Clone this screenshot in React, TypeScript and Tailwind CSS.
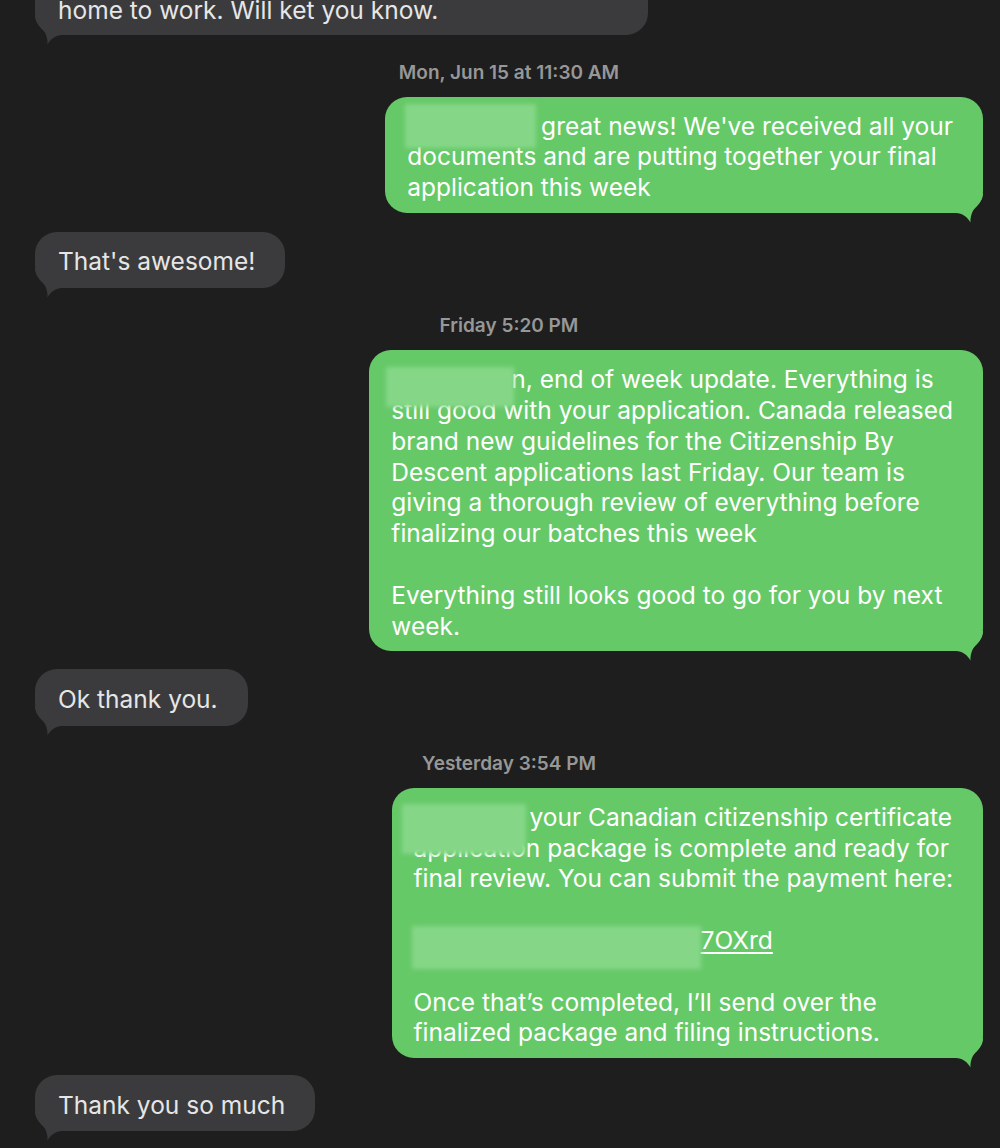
import type { ReactNode } from "react";

type Side = "in" | "out";

// iMessage-style curled tail, drawn for the left side; mirrored for sent bubbles
function Tail({ side }: { side: Side }) {
  const isOut = side === "out";
  return (
    <svg
      viewBox="0 0 30 30"
      className={
        isOut
          ? "absolute right-0 bottom-[-10px] h-[30px] w-[30px] -scale-x-100 fill-[#66c968]"
          : "absolute left-0 bottom-[-10px] h-[30px] w-[30px] fill-[#3b3b3d]"
      }
    >
      <path d="M0 0 H30 V20 H27 C21 20 15.5 24 12.5 29.5 C12.8 24 11 18 7.5 14.5 C3 10 0 6 0 0 Z" />
    </svg>
  );
}

function Bubble({ side, children, className = "" }: { side: Side; children: ReactNode; className?: string }) {
  const base =
    side === "out"
      ? "self-end bg-[#66c968] text-white pl-[22px] pr-[30px] pt-[14px] pb-[10px]"
      : "self-start bg-[#3b3b3d] text-[#e6e6e6] pl-[23px] pr-[30px] pt-[14.5px] pb-[11px]";
  return (
    <div className={`relative rounded-[22px] text-[24.5px] leading-[30.8px] whitespace-nowrap ${base} ${className}`}>
      <Tail side={side} />
      <div className="relative">{children}</div>
    </div>
  );
}

// soft patch hiding a name or a link
function Redact({ w, className }: { w: string; className: string }) {
  return (
    <span className={`relative inline-block align-top ${w}`}>
      <span className={`absolute z-10 bg-[#85d787] blur-[2px] ${className}`} />
    </span>
  );
}

function Stamp({ day, time }: { day: string; time: string }) {
  return (
    <div className="mt-[27px] mb-[13px] self-stretch text-center text-[19px] leading-[22px] font-semibold text-[#979797]">
      {day} {time}
    </div>
  );
}

export default function App() {
  return (
    <div className="h-[1148px] w-[1000px] overflow-hidden bg-[#1e1e1e] font-['Inter',sans-serif] antialiased">
      <div className="flex flex-col pl-[35px] pr-[17px]">
        <Bubble side="in" className="mt-[-50px] w-[613px] pb-[8.5px]!">
          <div>I'll have to see if I can get a ride from</div>
          <div>home to work. Will ket you know.</div>
        </Bubble>

        <Stamp day="Mon, Jun 15" time="at 11:30 AM" />
        <Bubble side="out">
          <div>
            <Redact w="w-[127px]" className="-left-[2px] -top-[7px] h-[44px] w-[131px]" /> great news! We've received all your
          </div>
          <div>documents and are putting together your final</div>
          <div>application this week</div>
        </Bubble>

        <Bubble side="in" className="mt-[19px]">
          That's awesome!
        </Bubble>

        <Stamp day="Friday" time="5:20 PM" />
        <Bubble side="out">
          <div>
            <Redact w="w-[120px]" className="-left-[5px] top-[3px] h-[40px] w-[128px]" />n, end of week update. Everything is
          </div>
          <div>still good with your application. Canada released</div>
          <div>brand new guidelines for the Citizenship By</div>
          <div>Descent applications last Friday. Our team is</div>
          <div>giving a thorough review of everything before</div>
          <div>finalizing our batches this week</div>
          <div>&nbsp;</div>
          <div>Everything still looks good to go for you by next</div>
          <div>week.</div>
        </Bubble>

        <Bubble side="in" className="mt-[18px]">
          Ok thank you.
        </Bubble>

        <Stamp day="Yesterday" time="3:54 PM" />
        <Bubble side="out">
          <div>
            <Redact w="w-[116px]" className="-left-[12px] top-[2px] h-[50px] w-[124px]" />your Canadian citizenship certificate
          </div>
          <div>application package is complete and ready for</div>
          <div>final review. You can submit the payment here:</div>
          <div>&nbsp;</div>
          <div>
            <Redact w="w-[287px]" className="-left-[2px] top-[1px] h-[43px] w-[289px]" />
            <span className="underline underline-offset-[3px]">7OXrd</span>
          </div>
          <div>&nbsp;</div>
          <div>Once that’s completed, I’ll send over the</div>
          <div>finalized package and filing instructions.</div>
        </Bubble>

        <Bubble side="in" className="mt-[17px]">
          Thank you so much
        </Bubble>
      </div>
    </div>
  );
}
